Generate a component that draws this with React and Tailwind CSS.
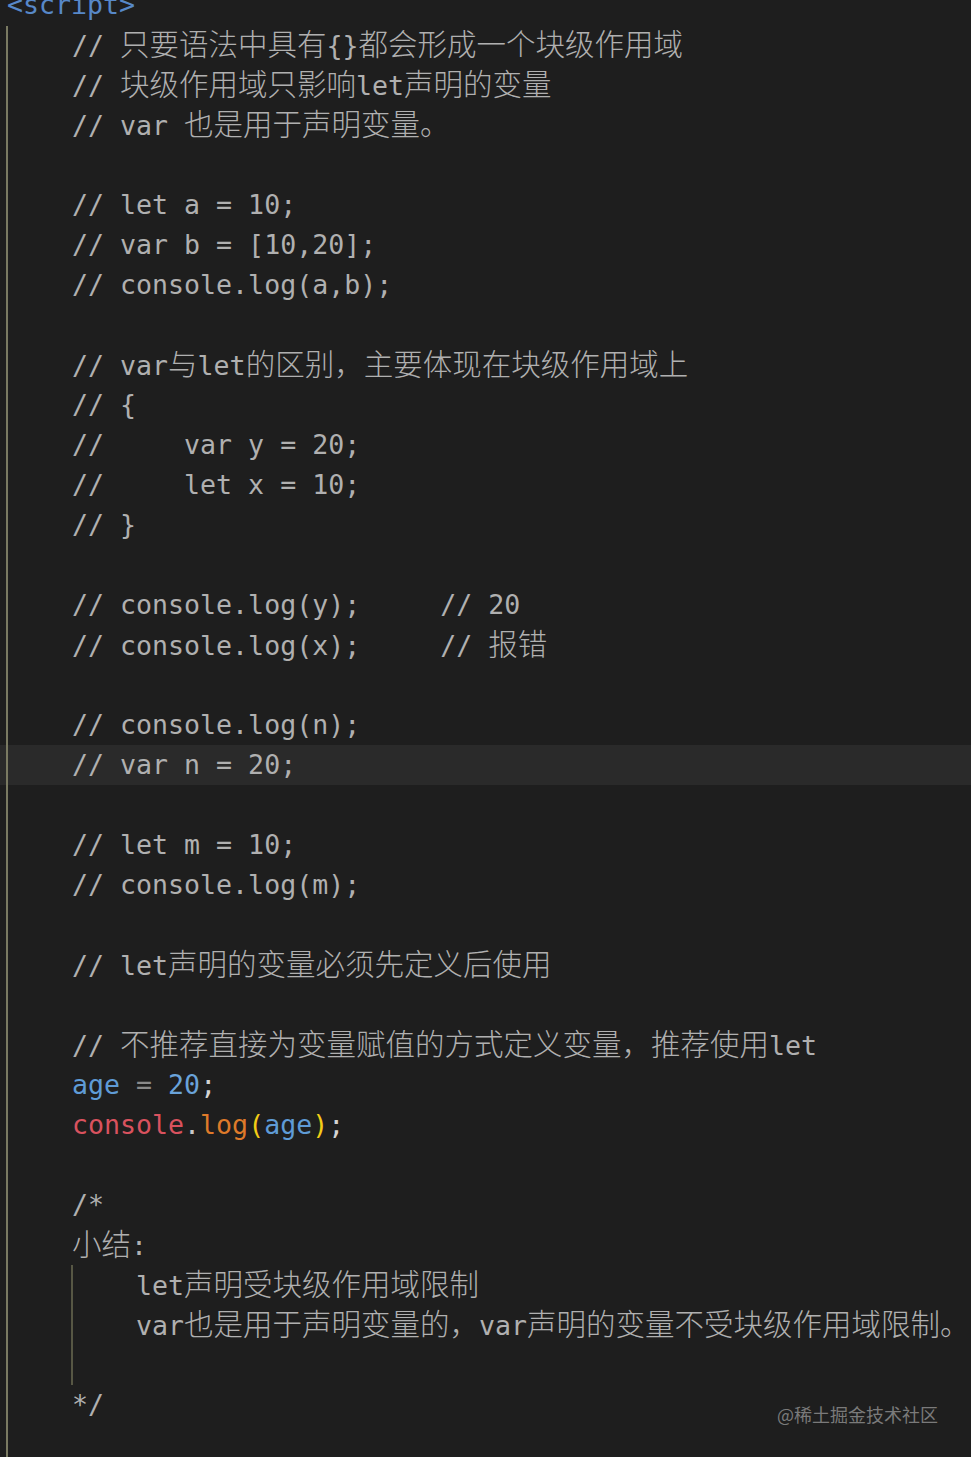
import React from "react";

// CJK runs get a larger size so they sit wider than the mono glyphs, like the editor's fallback font
const CJK = /([\u3000-\u303f\u3400-\u9fff\uff00-\uffef]+)/;

function T({ s }) {
  return s.split(CJK).map((part, i) =>
    i % 2 ? (
      <span key={i} className="text-[29.5px] font-light">
        {part}
      </span>
    ) : (
      part
    )
  );
}

const comments = [
  "// 只要语法中具有{}都会形成一个块级作用域",
  "// 块级作用域只影响let声明的变量",
  "// var 也是用于声明变量。",
  "",
  "// let a = 10;",
  "// var b = [10,20];",
  "// console.log(a,b);",
  "",
  "// var与let的区别，主要体现在块级作用域上",
  "// {",
  "//     var y = 20;",
  "//     let x = 10;",
  "// }",
  "",
  "// console.log(y);     // 20",
  "// console.log(x);     // 报错",
  "",
  "// console.log(n);",
  "// var n = 20;",
  "",
  "// let m = 10;",
  "// console.log(m);",
  "",
  "// let声明的变量必须先定义后使用",
  "",
  "// 不推荐直接为变量赋值的方式定义变量，推荐使用let",
];

function Line({ children, active = false, className = "" }) {
  return (
    <div
      className={`h-[40px] leading-[40px] whitespace-pre pl-[72px] ${active ? "bg-[#2a2a2a]" : ""} ${className}`}
    >
      {children}
    </div>
  );
}

export default function App() {
  return (
    <div
      className="relative h-[1457px] overflow-hidden bg-[#1e1e1e] text-[26.6px] text-[#b0b0b0]"
      style={{ fontFamily: '"DejaVu Sans Mono", "Noto Sans CJK SC", monospace' }}
    >
      {/* indent guide */}
      <div className="absolute left-[6px] top-[26px] bottom-0 w-[2px] bg-[#7a7a62]" />

      <div className="-mt-[15px]">
        <div className="h-[40px] leading-[40px] pl-[7px] text-[#5788c8] whitespace-pre">
          {"<script>"}
        </div>

        {comments.map((c, i) => (
          <Line key={i} active={c === "// var n = 20;"}>
            <T s={c} />
          </Line>
        ))}

        <Line>
          <span className="text-[#5f9bd6]">age</span>
          <span className="text-[#8a8a8a]"> = </span>
          <span className="text-[#6aa3da]">20</span>
          <span className="text-[#d4d4d4]">;</span>
        </Line>
        <Line>
          <span className="text-[#d9525e]">console</span>
          <span className="text-[#c8c8c8]">.</span>
          <span className="text-[#de7a2a]">log</span>
          <span className="text-[#f2cc16]">(</span>
          <span className="text-[#5f9bd6]">age</span>
          <span className="text-[#f2cc16]">)</span>
          <span className="text-[#d4d4d4]">;</span>
        </Line>
        <Line />

        <Line>/*</Line>
        <Line>
          <T s="小结:" />
        </Line>
        <div className="ml-[71px] border-l-2 border-[#575744]">
          <div className="h-[40px] leading-[40px] whitespace-pre pl-[63px]">
            <T s="let声明受块级作用域限制" />
          </div>
          <div className="h-[40px] leading-[40px] whitespace-pre pl-[63px]">
            <T s="var也是用于声明变量的，var声明的变量不受块级作用域限制。" />
          </div>
          <div className="h-[40px]" />
        </div>
        <Line>*/</Line>
      </div>

      <div
        className="absolute right-[33px] top-[1401px] text-[18px] leading-[26px] text-[#7a7a7a]"
        style={{ fontFamily: '"Noto Sans CJK SC", sans-serif' }}
      >
        @稀土掘金技术社区
      </div>
    </div>
  );
}
